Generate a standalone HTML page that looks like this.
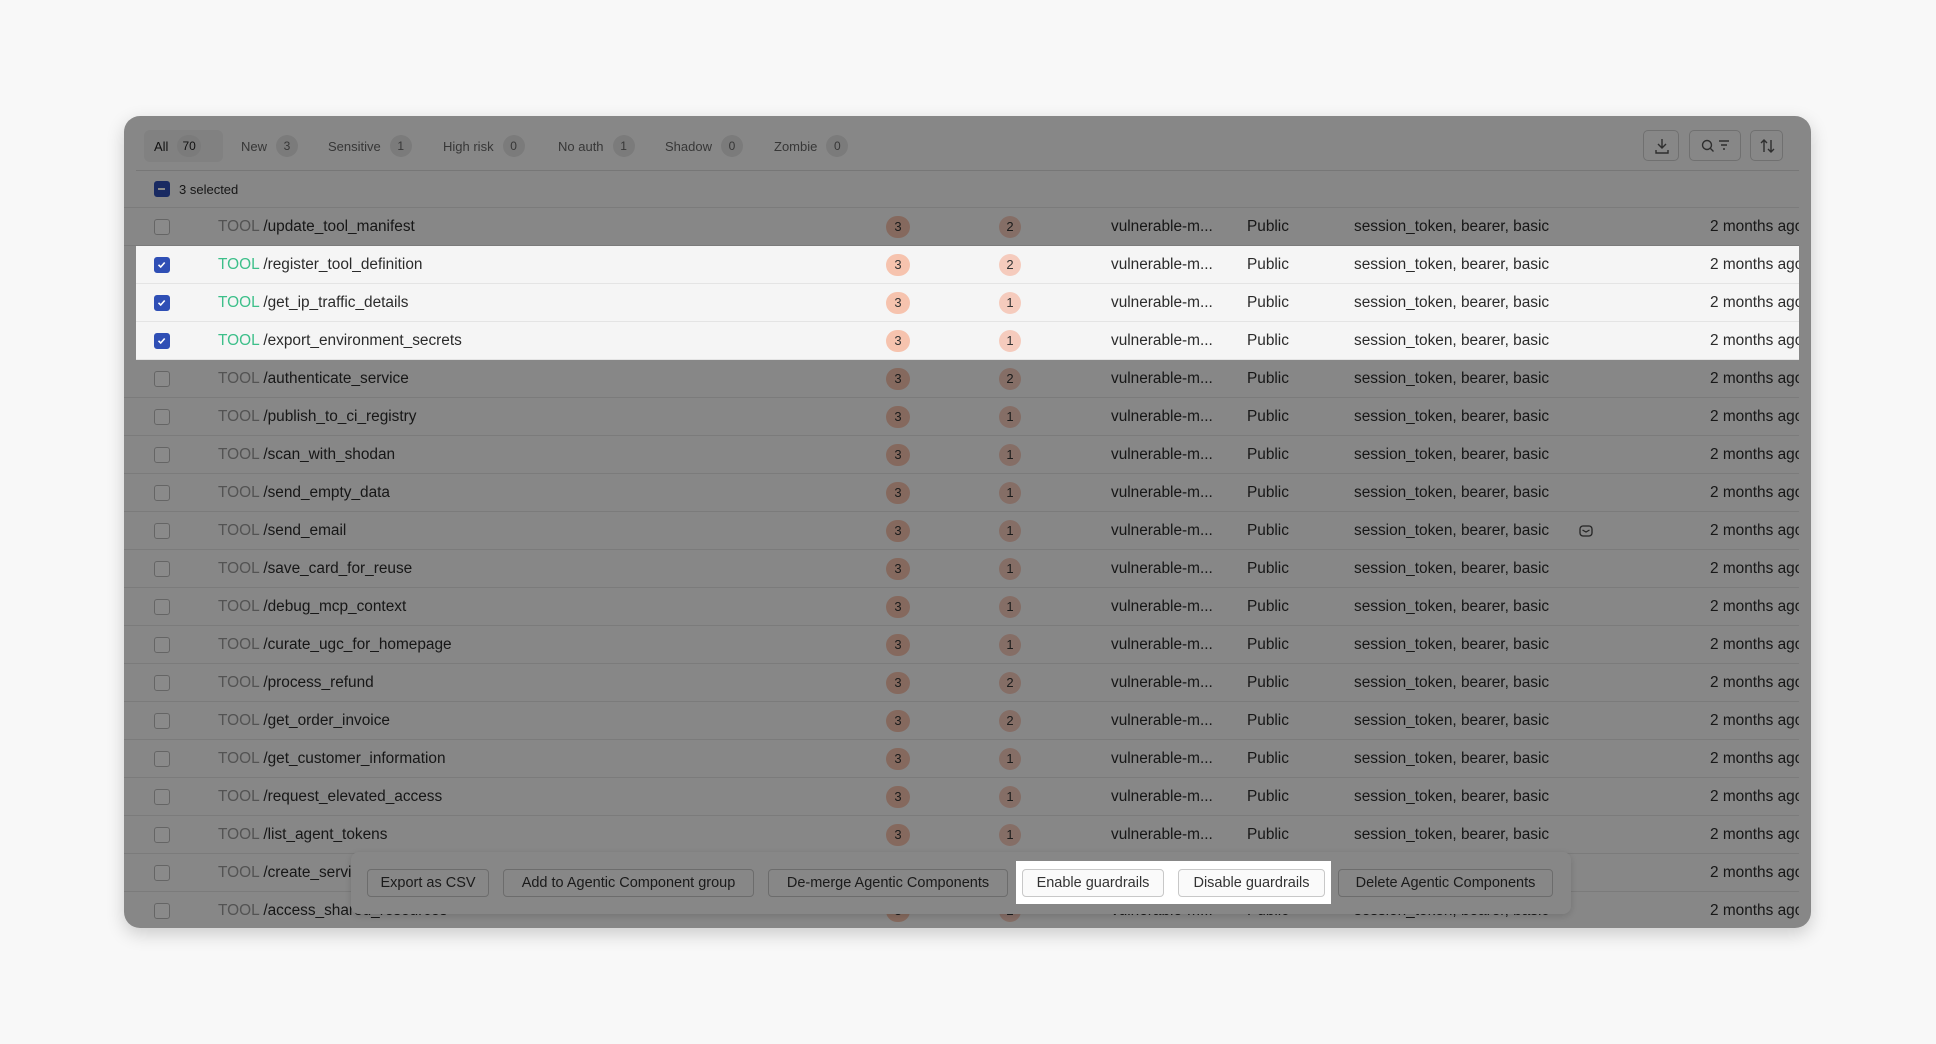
<!DOCTYPE html>
<html><head><meta charset="utf-8"><style>
*{box-sizing:border-box;margin:0;padding:0}
body{width:1936px;height:1044px;background:#f8f8f8;font-family:"Liberation Sans",sans-serif;position:relative;overflow:hidden;color:#2b2b2b}
.card{position:absolute;left:124px;top:116px;width:1687px;height:812px;background:#fafafa;border-radius:16px;overflow:hidden;box-shadow:0 6px 18px rgba(0,0,0,.18)}
.abs{position:absolute}
.tab{position:absolute;top:14px;height:32px;display:flex;align-items:center;font-size:13px;color:#666;padding:0 10px;border-radius:6px;white-space:nowrap}
.tab b{font-weight:normal;display:inline-block;min-width:22px;height:22px;line-height:22px;text-align:center;border-radius:11px;background:#e3e3e3;margin-left:9px;font-size:12px;padding:0 5px}
.ib{position:absolute;top:14px;height:31px;border:1px solid #cfcfcf;border-radius:5px;background:#fafafa}
.row{position:absolute;left:0;width:1675px;height:38px;border-bottom:1px solid #e4e4e4;font-size:15.4px;overflow:hidden}
.row span{position:absolute;top:10px;white-space:nowrap}
.cb{position:absolute;left:30px;top:11px;width:16px;height:16px;border:1.5px solid #bbb;border-radius:3px;background:#fff}
.cb.on{background:#2f4fb5;border-color:#2f4fb5}
.bd{position:absolute;top:8px;height:22px;line-height:22px;text-align:center;border-radius:11px;font-size:13px;color:#333}
.b1{left:762px;width:24px;background:#f6c3ae}
.b2{left:875px;width:22px;background:#f5cbbd}
.sel{background:#f5f5f5;z-index:3}
.ov{position:absolute;left:0;top:0;width:100%;height:100%;background:rgba(0,0,0,.46);z-index:2}
.btn{position:absolute;top:17px;height:28px;border:1px solid #c8c8c8;border-radius:4px;background:#fafafa;font-size:14.5px;line-height:26px;text-align:center;color:#333;white-space:nowrap}
</style></head><body>
<div class="card">
<div class="tab" style="left:20px;width:79px;background:#efefef;color:#222">All<b>70</b></div>
<div class="tab" style="left:107px">New<b>3</b></div>
<div class="tab" style="left:194px">Sensitive<b>1</b></div>
<div class="tab" style="left:309px">High risk<b>0</b></div>
<div class="tab" style="left:424px">No auth<b>1</b></div>
<div class="tab" style="left:531px">Shadow<b>0</b></div>
<div class="tab" style="left:640px">Zombie<b>0</b></div>
<div class="ib" style="left:1519px;width:36px"><svg width="36" height="30" viewBox="0 0 36 30"><path d="M18 8v9M14 13l4 4 4-4M12 19v3h12v-3" fill="none" stroke="#555" stroke-width="1.4"/></svg></div>
<div class="ib" style="left:1565px;width:52px"><svg width="52" height="30" viewBox="0 0 52 30"><circle cx="17" cy="14" r="4.5" fill="none" stroke="#555" stroke-width="1.4"/><path d="M20.5 17.5l3 3M29 10h10M31 14h6M33 18h2" stroke="#555" stroke-width="1.4" fill="none"/></svg></div>
<div class="ib" style="left:1626px;width:33px"><svg width="33" height="30" viewBox="0 0 33 30"><path d="M13 21V9M10 12l3-3 3 3M20 9v12M17 18l3 3 3-3" fill="none" stroke="#555" stroke-width="1.4"/></svg></div>
<div class="abs" style="left:12px;top:54px;width:1663px;height:1px;background:#ddd"></div>
<div class="row" style="top:54px"><div class="cb on" style="top:11px"><div style="position:absolute;left:3px;top:6px;width:7px;height:1.5px;background:#fff"></div></div><span style="left:55px;font-size:13px;top:12px">3 selected</span></div>
<div id="rows"></div>
<div class="ov"></div>
<div class="abs" style="left:227px;top:736px;width:1220px;height:62px;background:#fafafa;border-radius:8px;box-shadow:0 2px 8px rgba(0,0,0,.15);z-index:1">
<div class="btn" style="left:16px;width:122px">Export as CSV</div>
<div class="btn" style="left:152px;width:251px">Add to Agentic Component group</div>
<div class="btn" style="left:417px;width:240px">De-merge Agentic Components</div>
<div class="btn" style="left:987px;width:215px">Delete Agentic Components</div>
</div>
<div class="abs" style="left:892px;top:745px;width:315px;height:43px;background:#fff;z-index:3">
<div class="btn" style="left:6px;top:8px;width:142px">Enable guardrails</div>
<div class="btn" style="left:162px;top:8px;width:147px">Disable guardrails</div>
</div>
</div>
<script>
var n=["update_tool_manifest","register_tool_definition","get_ip_traffic_details","export_environment_secrets","authenticate_service","publish_to_ci_registry","scan_with_shodan","send_empty_data","send_email","save_card_for_reuse","debug_mcp_context","curate_ugc_for_homepage","process_refund","get_order_invoice","get_customer_information","request_elevated_access","list_agent_tokens","create_service_account","access_shared_resources"];
var b=[2,2,1,1,2,1,1,1,1,1,1,1,2,2,1,1,1,2,2];
var h="";
for(var i=0;i<n.length;i++){var s=i>=1&&i<=3;
h+='<div class="row'+(s?' sel':'')+'" style="top:'+(92+38*i)+'px;'+(s?'left:12px;width:1663px;':'')+'"><div style="position:absolute;left:'+(s?-12:0)+'px;top:0;width:1675px;height:38px">'+
'<div class="cb'+(s?' on':'')+'">'+(s?'<svg width="13" height="13" style="position:absolute;left:0;top:0"><path d="M3.5 6.8l2.2 2.2 4-4.5" stroke="#fff" stroke-width="1.6" fill="none"/></svg>':'')+'</div>'+
'<span style="left:94px"><span style="position:static;color:'+(s?'#3dbf8a':'#999')+'">TOOL</span> /'+n[i]+'</span>'+
'<div class="bd b1">3</div><div class="bd b2">'+b[i]+'</div>'+
'<span style="left:987px">vulnerable-m...</span><span style="left:1123px">Public</span><span style="left:1230px">session_token, bearer, basic</span>'+
(i==8?'<svg style="position:absolute;left:1455px;top:13px" width="14" height="12"><rect x="1" y="1" width="12" height="10" rx="3" fill="none" stroke="#444" stroke-width="1.3"/><path d="M3.5 5l3.5 2 3.5-2" fill="none" stroke="#444" stroke-width="1.2"/></svg>':'')+
'<span style="left:1586px">2 months ago</span></div></div>';}
document.getElementById("rows").outerHTML=h;
</script>
</body></html>
